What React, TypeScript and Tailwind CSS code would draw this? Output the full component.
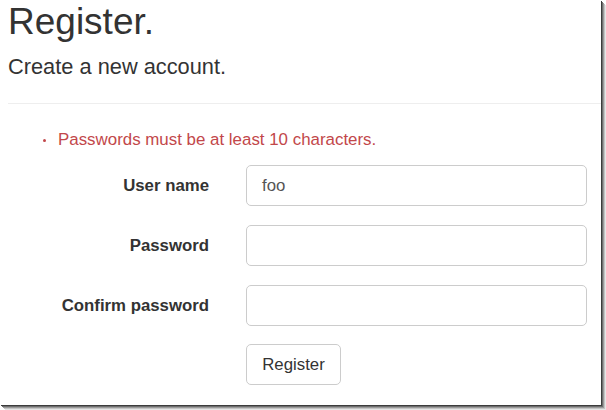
import React from "react";

const font = { fontFamily: '"Liberation Sans", Arial, sans-serif' };

function Row({ label, value }: { label: string; value?: string }) {
  return (
    <div className="flex items-center">
      <div className="w-[209px] text-right text-[16.8px] font-bold text-[#333]">{label}</div>
      <div className="ml-[37px] flex h-[41px] w-[341px] items-center rounded-[5px] border border-[#ccc] bg-white pl-[15px] text-[16.8px] text-[#555]">
        {value}
      </div>
    </div>
  );
}

export default function App() {
  return (
    <div className="h-[410px] w-[606px] bg-white" style={font}>
      <div className="h-[405px] w-[601px] bg-white shadow-[1px_1px_0_#3c3c3c,2px_2px_0_#6e6e6e,3px_3px_0_#9a9a9a,4px_4px_0_#c4c4c4,5px_5px_0_#e6e6e6]">
        <div className="pt-[2px]">
          <h2 className="pl-[8px] text-[37px] leading-[1.1] font-normal text-[#333]">Register.</h2>
          <h4 className="mt-[12px] pl-[8px] text-[21.8px] leading-[1.1] font-normal text-[#333]">Create a new account.</h4>
          <div className="mt-[24.6px] ml-[8px] h-[1px] bg-[#eee]" />
          <div className="mt-[24px] flex h-[24px] items-center text-[16.9px] leading-[24px] text-[#c2474a]">
            <span className="ml-[43px] mt-[1px] h-[3px] w-[3px] rounded-full bg-[#c2474a]" />
            <span className="ml-[12px]">Passwords must be at least 10 characters.</span>
          </div>
          <div className="mt-[12.8px] flex flex-col gap-[19px]">
            <Row label="User name" value="foo" />
            <Row label="Password" />
            <Row label="Confirm password" />
          </div>
          <div className="mt-[18px] ml-[246px]">
            <div className="flex h-[41px] w-[95px] items-center justify-center rounded-[5px] border border-[#ccc] text-[16.8px] text-[#333]">
              Register
            </div>
          </div>
        </div>
      </div>
    </div>
  );
}
